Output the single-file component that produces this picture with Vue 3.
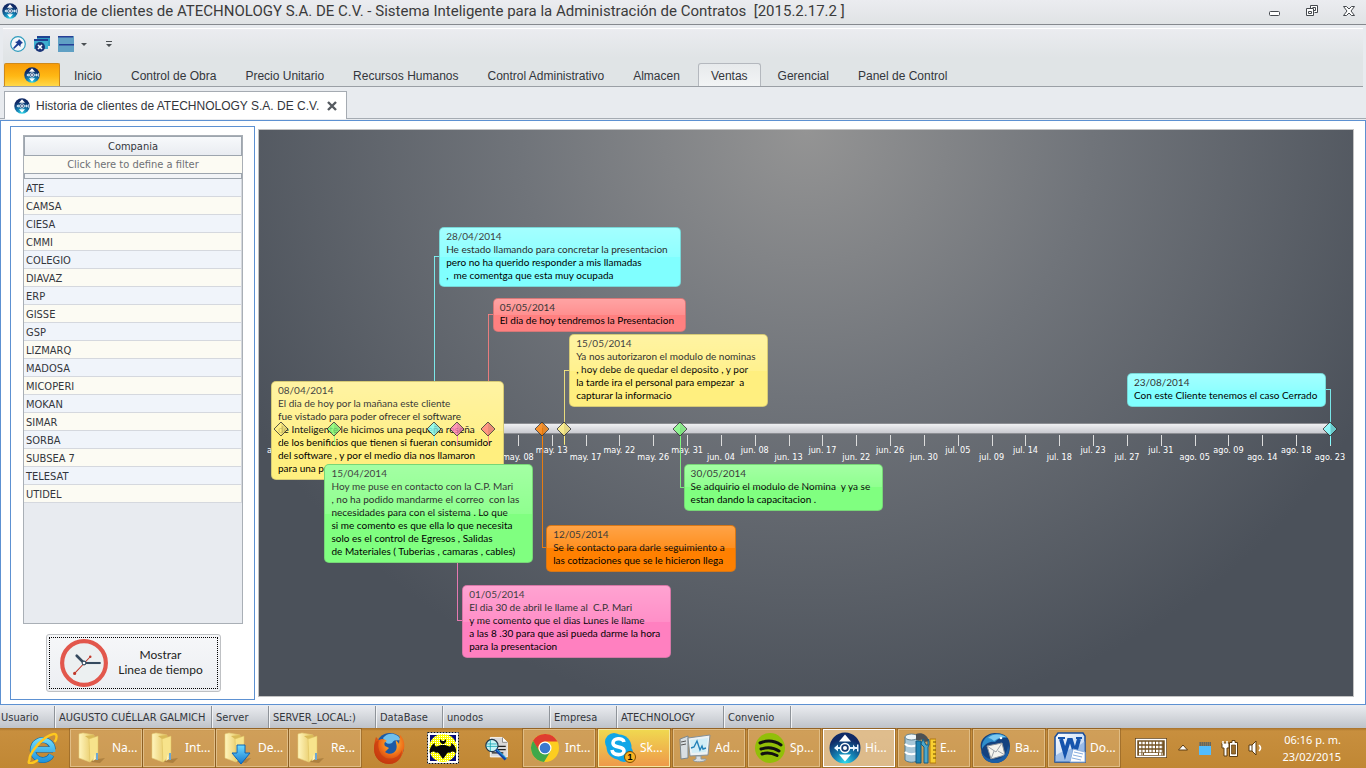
<script setup>
const menu = ['Inicio', 'Control de Obra', 'Precio Unitario', 'Recursos Humanos', 'Control Administrativo', 'Almacen', 'Ventas', 'Gerencial', 'Panel de Control']

const companies = ['ATE', 'CAMSA', 'CIESA', 'CMMI', 'COLEGIO', 'DIAVAZ', 'ERP', 'GISSE', 'GSP', 'LIZMARQ', 'MADOSA', 'MICOPERI', 'MOKAN', 'SIMAR', 'SORBA', 'SUBSEA 7', 'TELESAT', 'UTIDEL']

const tickLabels = [
  'abr. 08', 'abr. 12', 'abr. 17', 'abr. 21', 'abr. 25', 'abr. 30', 'may. 04', 'may. 08',
  'may. 13', 'may. 17', 'may. 22', 'may. 26', 'may. 31', 'jun. 04', 'jun. 08', 'jun. 13',
  'jun. 17', 'jun. 22', 'jun. 26', 'jun. 30', 'jul. 05', 'jul. 09', 'jul. 14', 'jul. 18',
  'jul. 23', 'jul. 27', 'jul. 31', 'ago. 05', 'ago. 09', 'ago. 14', 'ago. 18', 'ago. 23',
]
const lastTick = tickLabels.length - 1

/* at: place on the axis in tenths of a percent; y: card offset from the axis; elbow: connector offset from the axis */
const events = [
  { date: '08/04/2014', at: 0, x: -10, y: -47, w: 233, elbow: 0, color: '#ffef7f', lines: ['El dia de hoy por la mañana este cliente', 'fue vistado para poder ofrecer el software', 'de Inteligente le hicimos una pequeña reseña', 'de los benificios que tienen si fueran consumidor', 'del software , y por el medio dia nos llamaron', 'para una presentacion'] },
  { date: '15/04/2014', at: 51, x: -10, y: 36, w: 209, elbow: 0, color: '#80ff80', lines: ['Hoy me puse en contacto con la C.P. Mari', ', no ha podido mandarme el correo  con las', 'necesidades para con el sistema . Lo que', 'si me comento es que ella lo que necesita', 'solo es el control de Egresos , Salidas', 'de Materiales ( Tuberias , camaras , cables)'] },
  { date: '28/04/2014', at: 146, x: 5, y: -201, w: 242, elbow: -172, color: '#80ffff', lines: ['He estado llamando para concretar la presentacion', 'pero no ha querido responder a mis llamadas', ',  me comentga que esta muy ocupada'] },
  { date: '01/05/2014', at: 168, x: 5, y: 157, w: 209, elbow: 192, color: '#ff80c0', lines: ['El dia 30 de abril le llame al  C.P. Mari', 'y me comento que el dias Lunes le llame', 'a las 8 .30 para que asi pueda darme la hora', 'para la presentacion'] },
  { date: '05/05/2014', at: 197, x: 5, y: -130, w: 193, elbow: -114, color: '#ff8080', lines: ['El dia de hoy tendremos la Presentacion'] },
  { date: '12/05/2014', at: 249, x: 4, y: 97, w: 190, elbow: 119, color: '#ff8000', lines: ['Se le contacto para darle seguimiento a', 'las cotizaciones que se le hicieron llega'] },
  { date: '15/05/2014', at: 270, x: 5, y: -94, w: 199, elbow: -58, color: '#ffef7f', lines: ['Ya nos autorizaron el modulo de nominas', ', hoy debe de quedar el deposito , y por', 'la tarde ira el personal para empezar  a', 'capturar la informacio'] },
  { date: '30/05/2014', at: 380, x: 4, y: 36, w: 199, elbow: 59, color: '#80ff80', lines: ['Se adquirio el modulo de Nomina  y ya se', 'estan dando la capacitacion .'] },
  { date: '23/08/2014', at: 1000, x: -203, y: -55, w: 199, elbow: -39, left: true, color: '#80ffff', lines: ['Con este Cliente tenemos el caso Cerrado'] },
]

const status = [
  ['Usuario', 's55'], ['AUGUSTO CUÉLLAR GALMICH', 's157'], ['Server', 's57'], ['SERVER_LOCAL:)', 's107'],
  ['DataBase', 's67'], ['unodos', 's107'], ['Empresa', 's67'], ['ATECHNOLOGY', 's107'], ['Convenio', 's67'],
]

const folders = [['i-folder', 'Na...'], ['i-folder', 'Int...'], ['i-download', 'De...'], ['i-folder', 'Re...']]
const apps = [
  ['i-chrome', 'Int...', ''], ['i-skype', 'Sk...', 'alert', '1'], ['i-monitor', 'Ad...', ''], ['i-spotify', 'Sp...', ''],
  ['i-logo', 'Hi...', 'current'], ['i-tools', 'E...', ''], ['i-bird', 'Ba...', ''], ['i-word', 'Do...', ''],
]

function stem(e) {
  const top = Math.min(e.elbow, 0)
  const bottom = Math.max(e.elbow, 16)
  return { left: e.at / 10 + '%', top: top + 'px', height: bottom - top + 'px', background: e.color }
}
function elbow(e) {
  return { left: `calc(${e.at / 10}% - ${e.left ? 5 : 0}px)`, top: e.elbow + 'px', background: e.color }
}
function card(e) {
  return { left: `calc(${e.at / 10}% + ${e.x}px)`, top: e.y + 'px', width: e.w + 'px', backgroundColor: e.color }
}
</script>

<template>
  <svg class="defs" aria-hidden="true">
    <defs>
      <radialGradient id="g-logo" cx=".5" cy="1" r=".8">
        <stop offset="0" stop-color="#2fe0f0" /><stop offset=".45" stop-color="#1583b4" /><stop offset="1" stop-color="#102a66" />
      </radialGradient>
      <linearGradient id="g-folder" x1="0" x2="1"><stop offset="0" stop-color="#fff5bd" /><stop offset="1" stop-color="#e5c55c" /></linearGradient>
      <linearGradient id="g-blue" x1="0" y1="0" x2="0" y2="1"><stop offset="0" stop-color="#6fdcff" /><stop offset="1" stop-color="#1577cf" /></linearGradient>
      <linearGradient id="g-ie" gradientUnits="userSpaceOnUse" x1="0" y1="4" x2="0" y2="30"><stop offset="0" stop-color="#7be4ff" /><stop offset="1" stop-color="#1f93dc" /></linearGradient>
      <radialGradient id="g-fox" cx=".6" cy=".3" r=".8"><stop offset="0" stop-color="#ffc53a" /><stop offset=".5" stop-color="#ee6a17" /><stop offset="1" stop-color="#b02a0c" /></radialGradient>
      <linearGradient id="g-word" x1="0" y1="0" x2="1" y2="1"><stop offset="0" stop-color="#fff" /><stop offset="1" stop-color="#a9c8ef" /></linearGradient>
      <pattern id="p-dots" width="2" height="2" patternUnits="userSpaceOnUse"><rect width="2" height="2" fill="#ff0" /><path d="M0 0h1v1H0z" fill="#fff" /></pattern>
    </defs>
    <symbol id="i-logo" viewBox="0 0 32 32">
      <circle cx="16" cy="16" r="15.500" fill="url(#g-logo)" />
      <path d="M16 2.500l6 7H10zM16 29.500l6-7H10z" fill="#fff" />
      <path d="M5 16l4-3.500v2.500h3v2H9v2.500zM20 15h4v-2.500l2 2.500h2v-2.500h1.500v7H28V17h-2l-2 2.500V17h-4z" fill="#eaf6ff" />
      <circle cx="16" cy="16" r="4.500" fill="#173b73" stroke="#fff" stroke-width="1.500" /><circle cx="16" cy="16" r="2" fill="#fff" />
    </symbol>
    <symbol id="i-folder" viewBox="0 0 32 32">
      <path d="M15 28l14-2-5 5-9-1z" fill="#8a6228" opacity=".45" />
      <path d="M3 2l4-1 11 2v24l-4 3L3 26z" fill="url(#g-folder)" stroke="#e8d078" stroke-width=".6" />
      <path d="M9 4l9-1v24l-4 3-1-23z" fill="#d9ba58" /><path d="M13 7l9-3v19l-8 7z" fill="#f7e38b" stroke="#dcc160" stroke-width=".5" />
      <path d="M20 21h2v7h-2z" fill="#6ca8d4" /><path d="M17 29l2-7 1 5z" fill="#fff4bd" />
    </symbol>
    <symbol id="i-download" viewBox="0 0 32 32">
      <use href="#i-folder" width="32" height="32" />
      <path d="M15 13h8v8h5l-9 11-9-11h5z" fill="url(#g-blue)" stroke="#0d63b4" />
    </symbol>
    <symbol id="i-ie" viewBox="0 0 32 32">
      <path d="M8 17.500h19M26.800 17.500A10 10 0 1 0 25.500 23" fill="none" stroke="#0b66a8" stroke-width="6" />
      <path d="M8 17.500h18.800A10 10 0 1 0 25.500 23" fill="none" stroke="url(#g-ie)" stroke-width="4.800" />
      <path d="M4 27C0 33 6 32 12 28M3.500 28C3 23 10 13 19 6 25 2 31 0 30.500 5c0 2-1 4-2 5" fill="none" stroke="#ffc81e" stroke-width="2.400" />
    </symbol>
    <symbol id="i-firefox" viewBox="0 0 32 32">
      <circle cx="17" cy="15" r="14" fill="#1c5aa6" /><path d="M10 6c5-7 15-5 18 2-4 1-7-1-9 3-4 2-7 0-9-5z" fill="#6fc0ed" />
      <path d="M3 5l3 3c3-2 6-1 8 1-3 1-3 3-2 5l4 2-4 4c4 3 9 2 11-2 2-5-1-7 0-10 1 2 2 2 3 4l1-9c4 4 5 9 4 14C29 27 23 32 16 32 8 32 1 26 1 17 1 12 2 8 3 5z" fill="url(#g-fox)" />
      <path d="M1 17C1 11 3 9 6 8c-2 6 0 15 7 18 7 2 13-1 16-8 0 9-6 14-13 14S1 26 1 17z" fill="#c93a10" opacity=".7" />
    </symbol>
    <symbol id="i-bat" viewBox="0 0 32 32">
      <rect x="1" y="1" width="30" height="30" fill="#fff" stroke="#fff" stroke-width="2" /><rect x=".5" y=".5" width="31" height="31" fill="none" stroke="#111" stroke-dasharray="2 1" />
      <path d="M3 3h26v26H3z" fill="#060b78" /><circle cx="16" cy="16" r="14" fill="url(#p-dots)" />
      <path d="M13 7l2 2h2l2-2v3l-2 2h-2l-2-2zM8 11c-1 3 1 4 3 3l3-1h4l3 1c2 1 4 0 3-3 4 2 6 6 5 11-2-3-4-3-6-1-2-1-3 0-4 2l-3 4-3-4c-1-2-2-3-4-2-2-2-4-2-6 1-1-5 1-9 5-11z" fill="#080808" />
    </symbol>
    <symbol id="i-search" viewBox="0 0 32 32">
      <path d="M9 3h15l6 6v18H9z" fill="#d9d9d9" stroke="#fff" /><path d="M24 3v6h6" fill="#fff" stroke="#777" /><path d="M11 14h17M11 18h17M11 22h14" stroke="#222" stroke-width="1.500" />
      <circle cx="11" cy="13" r="7.500" fill="#c9f5f7" stroke="#25384a" stroke-width="1.500" /><path d="M5 11h12M4 14h14M9 6v14" stroke="#16a4b2" /><path d="M16 18l12 12" stroke="#1243a8" stroke-width="4" /><path d="M17 18l12 11" stroke="#27d9ed" />
    </symbol>
    <symbol id="i-chrome" viewBox="0 0 32 32">
      <circle cx="16" cy="16" r="14" fill="#fccd20" /><path d="M4 8.800A14 14 0 0 1 28.500 9.500H16a7 7 0 0 0-6.600 9z" fill="#df3d30" /><path d="M4 8.800A14 14 0 0 0 15 30l7-11.500a7 7 0 0 1-12.600-1z" fill="#3fa84a" />
      <circle cx="16" cy="16" r="6.500" fill="#fff" /><circle cx="16" cy="16" r="5.300" fill="#3979cf" />
    </symbol>
    <symbol id="i-skype" viewBox="0 0 32 32">
      <circle cx="10" cy="10" r="9" fill="#10a6e7" /><circle cx="20" cy="21" r="9" fill="#10a6e7" /><circle cx="15" cy="15" r="12.500" fill="#10a6e7" />
      <path d="M20 10c-1-5-11-4-11 1 0 6 11 2 11 8 0 5-11 5-12-1" fill="none" stroke="#fff" stroke-width="3.600" />
    </symbol>
    <symbol id="i-monitor" viewBox="0 0 32 32">
      <path d="M1 7l8-3v22l-7 1z" fill="#d8dee2" stroke="#7a868d" /><path d="M2 10l5-1M2 13l5-1" stroke="#555" /><path d="M9 6l22-3-2 20-18 1z" fill="#eef2f3" stroke="#849098" /><path d="M11 8l18-2-2 14-14 1z" fill="#d2edf6" /><path d="M12 16l3-1 3-6 3 9 2-4 1 3 3-1" fill="none" stroke="#2381b8" stroke-width="1.400" /><path d="M17 24h5v3h5c1 3-12 4-13 1l3-1z" fill="#d9dee1" stroke="#8f989d" />
    </symbol>
    <symbol id="i-spotify" viewBox="0 0 32 32">
      <circle cx="16" cy="16" r="15" fill="#92bf08" /><path d="M6 11c7-3 15-2 21 2M7 17c6-2 12-2 18 2M8 22c5-2 10-1 15 1.500" fill="none" stroke="#111" stroke-width="3" stroke-linecap="round" />
    </symbol>
    <symbol id="i-tools" viewBox="0 0 32 32">
      <path d="M1 5v23c3 3 10 3 13 0V5z" fill="#a9c8d9" stroke="#577b8b" /><ellipse cx="7.500" cy="5" rx="6.500" ry="3" fill="#edf6fa" stroke="#668797" /><path d="M1 12c3 3 10 3 13 0M1 20c3 3 10 3 13 0" fill="none" stroke="#fff" stroke-width="2" />
      <path d="M12 2c5-2 11 0 13 7l-4 1c-1-3-3-3-5-2h-4z" fill="#4c5155" /><path d="M12 9h5v22h-5z" fill="#1d83b4" stroke="#0f587e" /><path d="M19 7l-2 5 3 3v16h4V15l2-4-2-4v6h-2z" fill="#4ca7cd" stroke="#145d83" />
      <path d="M26 7h6v24h-6z" fill="#f8cf31" stroke="#b47a0e" /><path d="M29 10h3M29 14h3M29 18h3M29 22h3M29 26h3" stroke="#714b00" />
    </symbol>
    <symbol id="i-bird" viewBox="0 0 32 32">
      <path d="M2 17C0 7 8 1 17 1c9 0 14 5 14 13 0 10-6 17-15 17C8 31 3 26 2 17z" fill="#14427f" /><path d="M3 17C2 9 8 2 16 2c5-1 10 1 12 4-5-1-9 0-12 4C12 9 6 11 3 17z" fill="#2f8ecb" />
      <path d="M9 6c5-5 13-4 18-1-6 0-9 2-12 4-2-2-4-3-6-3z" fill="#7cc8ee" />
      <path d="M8 14l15-3 3 12-14 4z" fill="#f5f4ee" stroke="#8c9299" /><path d="M8 14l9 6 6-9M12 27l3-8M26 23l-7-4" fill="none" stroke="#9ea3a8" /><circle cx="22" cy="6" r="1.300" fill="#fff" />
      <path d="M2 19c3 7 11 11 20 7 4-3 7-8 7-13 3 8-2 18-13 18C8 31 3 26 2 19z" fill="#1b5ea6" />
    </symbol>
    <symbol id="i-word" viewBox="0 0 32 32">
      <path d="M4 1h25l2 3v26H1V5z" fill="url(#g-word)" stroke="#174c9b" stroke-width="1.500" /><path d="M1 24c10-8 19-5 30-15v21H1z" fill="#7da7dd" opacity=".6" />
      <path d="M7 7l4 14 4-13h2l4 13 4-14" fill="none" stroke="#1554ad" stroke-width="4" /><path d="M4 6h7M22 6h6" stroke="#1554ad" stroke-width="2" /><path d="M19 17l12 3v10H16z" fill="#fff" stroke="#8db0df" /><path d="M20 20l9 2M19 23l9 2M18 26l9 2" stroke="#89aede" />
    </symbol>
  </svg>

  <div class="desktop">
    <header class="titlebar">
      <svg class="ico16"><use href="#i-logo" /></svg>
      <h1>Historia de clientes de ATECHNOLOGY S.A. DE C.V. - Sistema Inteligente para la Administración de Contratos&nbsp; [2015.2.17.2 ]</h1>
      <button class="win" aria-label="Minimizar"><svg viewBox="0 0 12 12"><rect x=".5" y="6.500" width="10" height="4" rx="1" /></svg></button>
      <button class="win" aria-label="Restaurar"><svg viewBox="0 0 12 12"><path d="M4.500 3.500v-3h7v7h-3M.5 3.500h7v7h-7zM2.500 6.500h3v2h-3zM6.500 2.500h3v3h-2" /></svg></button>
      <button class="win" aria-label="Cerrar"><svg viewBox="0 0 12 12"><path d="M.5 1.500h3L6 4l2.500-2.500h3L8 6l3.500 4.500h-3L6 8l-2.500 2.500h-3L4 6z" /></svg></button>
    </header>

    <section class="ribbon">
      <div class="quick">
        <button aria-label="Fijar"><svg viewBox="0 0 16 16"><circle cx="8" cy="8" r="7.300" fill="#f4f8fa" stroke="#2e9bbd" stroke-width="1.200" /><path d="M9 3l4 4-1.500.5-1 1.500v2l-2-2L4 13l-1-1 4-4.500-2-1.500 2-.5L8.500 4z" fill="#1d3f94" /></svg></button>
        <button aria-label="Cerrar ventanas"><svg viewBox="0 0 16 16"><path d="M3 0h13v10H3z" fill="#2e9cc5" /><path d="M3 0h13v2H3z" fill="#1f4292" /><path d="M0 3h14v10H0z" fill="#3eaed0" /><path d="M0 3h14v2H0z" fill="#1f4292" /><circle cx="6" cy="11" r="5" fill="#1b3678" /><path d="M4 9l4 4M8 9l-4 4" stroke="#fff" stroke-width="1.600" /></svg></button>
        <button aria-label="Ventanas"><svg viewBox="0 0 16 16"><path d="M0 0h16v16H0z" fill="#60a0c4" /><path d="M0 0h15v1.500H0zM1 8h15v1.500H1z" fill="#263f96" /></svg></button>
        <button class="drop" aria-label="Opciones de ventanas"><svg viewBox="0 0 8 8"><path d="M1 3h6L4 6z" fill="#4b5054" /></svg></button>
        <button class="drop last" aria-label="Personalizar"><svg viewBox="0 0 8 8"><path d="M1 1h6v1H1zM1 4h6L4 7z" fill="#4b5054" /></svg></button>
      </div>
      <nav class="menu">
        <button class="appbtn" aria-label="Menú principal"><svg class="ico16"><use href="#i-logo" /></svg></button>
        <button v-for="m in menu" :key="m" class="menuitem" :class="{ active: m === 'Ventas' }">{{ m }}</button>
      </nav>
    </section>

    <div class="doctabs">
      <div class="doctab">
        <svg class="ico16"><use href="#i-logo" /></svg>
        <span>Historia de clientes de ATECHNOLOGY S.A. DE C.V.</span>
        <button aria-label="Cerrar pestaña"><svg viewBox="0 0 10 10"><path d="M1 1l8 8M9 1L1 9" stroke="#555a60" stroke-width="2.400" /></svg></button>
      </div>
    </div>

    <main class="work">
      <aside class="side">
        <div class="grid">
          <table>
            <thead>
              <tr><th scope="col">Compania</th></tr>
              <tr class="filter"><td>Click here to define a filter</td></tr>
              <tr class="split"><td></td></tr>
            </thead>
            <tbody>
              <tr v-for="c in companies" :key="c"><td>{{ c }}</td></tr>
            </tbody>
          </table>
        </div>
        <button class="show">
          <svg viewBox="0 0 48 48">
            <circle cx="24" cy="24" r="21" fill="#ecf0f1" stroke="#e2574c" stroke-width="4" />
            <path d="M15 34L30 18" stroke="#c0392b" stroke-width="1" /><circle cx="15" cy="34" r="1.500" fill="#c0392b" /><circle cx="30" cy="18" r="1.200" fill="#c0392b" />
            <path d="M24 24h16" stroke="#34495e" stroke-width="2" /><path d="M24 24l-7-7" stroke="#34495e" stroke-width="2.500" stroke-linecap="round" />
            <circle cx="24" cy="24" r="1.800" fill="#fff" stroke="#34495e" />
          </svg>
          <span>Mostrar<br>Linea de tiempo</span>
        </button>
      </aside>

      <section class="stage" aria-label="Linea de tiempo">
        <div class="axis">
          <div class="bar"></div>
          <template v-for="(t, i) in tickLabels" :key="t">
            <i class="tick" :style="{ left: (i * 100) / lastTick + '%' }"></i>
            <span class="tlabel" :class="{ low: i % 2 }" :style="{ left: (i * 100) / lastTick + '%' }">{{ t }}</span>
          </template>
          <template v-for="e in events" :key="e.date">
            <template v-if="e.elbow">
              <i class="stem" :style="stem(e)"></i>
              <i class="elbow" :style="elbow(e)"></i>
            </template>
          </template>
          <article v-for="e in events" :key="e.date" class="card" :style="card(e)">
            <time>{{ e.date }}</time>
            <p v-for="l in e.lines" :key="l">{{ l }}</p>
          </article>
          <i v-for="e in events" :key="e.date" class="tail" :style="{ left: e.at / 10 + '%', background: e.color }"></i>
          <svg v-for="e in events" :key="e.date" class="gem" viewBox="0 0 16 16" :style="{ left: e.at / 10 + '%' }">
            <path d="M8 1l7 7-7 7-7-7z" :fill="e.color" /><path d="M8 1l7 7-7 7z" fill="#000" opacity=".1" /><path d="M8 1l7 7-7 7-7-7z" fill="none" stroke="#333" />
          </svg>
        </div>
      </section>
    </main>

    <footer class="status">
      <span v-for="s in status" :key="s[0]" :class="s[1]">{{ s[0] }}</span>
    </footer>

    <nav class="taskbar">
      <button class="pin ie" aria-label="Internet Explorer"><svg><use href="#i-ie" /></svg></button>
      <div class="tasks tight">
        <button v-for="(f, i) in folders" :key="i" class="task"><svg><use :href="'#' + f[0]" /></svg>{{ f[1] }}</button>
      </div>
      <div class="pins">
        <button class="pin" aria-label="Firefox"><svg><use href="#i-firefox" /></svg></button>
        <button class="pin" aria-label="The Bat"><svg><use href="#i-bat" /></svg></button>
        <button class="pin small" aria-label="Buscar"><svg><use href="#i-search" /></svg></button>
      </div>
      <div class="tasks">
        <button v-for="a in apps" :key="a[0]" class="task" :class="a[2]"><svg><use :href="'#' + a[0]" /></svg>{{ a[1] }}<b v-if="a[3]" class="badge">{{ a[3] }}</b></button>
      </div>
      <div class="tray">
        <button aria-label="Teclado"><svg width="32" height="20" viewBox="0 0 32 20"><rect x="1.500" y="1.500" width="29" height="17" fill="none" stroke="#5d3d11" stroke-width="3" /><rect x="1.500" y="1.500" width="29" height="17" fill="#735222" stroke="#fff" stroke-width="1.500" /><path d="M4 5h24M4 9h24M4 13h24M4 16h4M24 16h4" stroke="#fff" stroke-width="2.400" stroke-dasharray="2.400 1" /><path d="M9 16h14" stroke="#fff" stroke-width="2" /></svg></button>
        <button aria-label="Iconos ocultos"><svg width="12" height="8" viewBox="0 0 12 8"><path d="M6 1l4.500 5h-9z" fill="#fff" stroke="#5d3d11" /></svg></button>
        <button aria-label="Calendario"><svg width="12" height="13" viewBox="0 0 12 13"><path d="M0 0h12v13H0z" fill="#52bdff" /><path d="M0 0h12v4H0z" fill="#66665f" /><path d="M0 1h12M0 3h12" stroke="#a88a57" stroke-dasharray="1 1" /></svg></button>
        <button aria-label="Batería"><svg width="17" height="17" viewBox="0 0 17 17"><path d="M1 3h7v5H6v8H3V8H1z" fill="#fff" stroke="#5d3d11" /><path d="M2 1v3M6 1v3" stroke="#fff" stroke-width="1.500" /><path d="M8.500 2.500H11v-2h3v2h2.500v14h-8z" fill="#fff" stroke="#5d3d11" /><path d="M10.500 5h4v9h-4z" fill="#9a6c2c" stroke="#5d3d11" stroke-width=".7" /></svg></button>
        <button aria-label="Volumen"><svg width="15" height="16" viewBox="0 0 15 16"><path d="M1 5h3l4-4v14l-4-4H1z" fill="#fff" stroke="#5d3d11" /><path d="M4 5v6" stroke="#5d3d11" /><path d="M11 5c2 2 2 4 0 6" fill="none" stroke="#fff" stroke-width="1.600" /></svg></button>
        <time class="clock">06:16 p. m.<br>23/02/2015</time>
      </div>
    </nav>
  </div>
</template>

<style>
html, body { margin: 0; background: #e8ebef; }
</style>

<style scoped>
.defs { position: absolute; width: 0; height: 0; }
button { font: inherit; color: inherit; border: 0; padding: 0; margin: 0; background: none; display: flex; align-items: center; }
.ico16 { width: 16px; height: 16px; flex: none; }
.desktop { display: flex; flex-direction: column; min-height: 100vh; overflow: hidden; font-family: "DejaVu Sans Condensed", "Noto Sans", sans-serif; font-size: 11px; color: #33363c; }

.titlebar { height: 25px; display: flex; align-items: center; padding: 0 11px 2px 2px; box-sizing: border-box; border-bottom: 1px solid #85898e; background: linear-gradient(#ebecf0, #e0e3e5); }
h1 { flex: 1; margin: 0 0 0 7px; font: 400 15px/20px Roboto, "Noto Sans", sans-serif; color: #3b3b3b; white-space: nowrap; }
.win { width: 12px; height: 12px; margin-left: 25px; }
.win svg { width: 12px; height: 12px; fill: #fff; stroke: #45494e; }

.ribbon { margin: 3px 3px 0; border-top: 1px solid #fff; border-bottom: 1px solid #9a9fa5; background: linear-gradient(#ebecf0, #e0e4e6 50%); height: 57px; display: flex; flex-direction: column; justify-content: space-between; }
.quick { display: flex; align-items: center; gap: 8px; padding: 7px 0 0 7px; }
.quick svg { width: 16px; height: 16px; }
.quick .drop svg { width: 8px; height: 8px; }
.quick .drop { margin-left: -2px; }
.quick .last { margin-left: 9px; }
.menu { display: flex; gap: 3px; font: 12px/14px "Liberation Sans", Arial, sans-serif; }
.appbtn { width: 56px; height: 23px; margin: 0 -2px 0 1px; justify-content: center; border: 1px solid #cf8a1b; border-bottom: 0; border-radius: 2px 2px 0 0; background: linear-gradient(#f79c08, #ffb814 55%, #ffd84a); }
.menuitem { padding: 1px 12px 0; height: 23px; border: 1px solid transparent; border-bottom: 0; }
.menuitem.active { padding: 1px 12px 0; margin: 0 1px 0 2px; border-color: #b4b8be; border-radius: 3px 3px 0 0; background: linear-gradient(#e7eaec, #f2f4f5); }

.doctabs { height: 31px; display: flex; align-items: flex-end; border-bottom: 1px solid #a5abb2; padding-left: 4px; background: #e8ebef; }
.doctab { height: 27px; display: flex; align-items: center; padding: 0 9px; border: 1px solid #a5abb2; border-bottom: 0; background: #fff; margin-bottom: -1px; font: 12px/14px "Liberation Sans", Arial, sans-serif; }
.doctab span { margin: 0 8px 0 6px; }
.doctab button svg { width: 10px; height: 10px; }

.work { flex: 1; display: flex; gap: 3px; margin-top: 1px; padding: 5px 11px 4px 9px; border: 1px solid #5d91d2; background: #fff; }
.side { flex: none; border: 1px solid #5d91d2; display: flex; flex-direction: column; align-items: center; padding: 8px 11px 7px 12px; box-sizing: border-box; width: 245px; }
.grid { flex: 1; align-self: stretch; border: 1px solid #a9afb6; background: #e8ebf0; margin-bottom: 10px; }
table { width: 100%; border-collapse: separate; border-spacing: 0; line-height: 15px; }
td, th { padding: 2px 2px 0; height: 15px; font-weight: 400; }
th { border: 1px solid #9da5ae; background: linear-gradient(#f7f9fb, #e9ecf1); line-height: 16px; }
tbody td { border-bottom: 1px solid #d5d8de; border-right: 1px solid #d5d8de; }
tbody tr:nth-child(odd) { background: #f0f4fa; }
tbody tr:nth-child(even) { background: #fcfbf3; }
.filter td { height: 16px; padding: 0 2px 1px; text-align: center; color: #6e7075; background: #fcfbf3; }
.split td { height: 4px; padding: 0; border: 1px solid #9da5ae; background: #f2f4f7; }
.show { width: 175px; height: 58px; flex: none; padding: 0 12px; justify-content: space-between; border: 1px solid #bfc1c4; border-radius: 3px; background: linear-gradient(#f6f7f9, #eceef2); outline: 1px dotted #000; outline-offset: -4px; font: 12px/15px Lato, sans-serif; text-align: center; color: #222; }
.show svg { width: 50px; height: 50px; }
.show span { flex: 1; padding: 0 0 2px 5px; }

.stage { flex: 1; margin-top: 3px; margin-bottom: 3px; padding: 298px 23px 0 22px; border: 1px solid #c2c2c2; background: radial-gradient(ellipse 58% 105% at 50% 0, #949494, #70747a 45%, #4b515a); overflow: hidden; }
.axis { position: relative; height: 0; }
.bar { position: absolute; left: 0; right: 0; top: -5px; height: 9px; border: solid #8c8e93; border-width: 1px 0; background: linear-gradient(#eff0f2, #c9cad0); }
.tick { position: absolute; top: 7px; width: 1px; height: 11px; background: #ddd; }
.tlabel { position: absolute; top: 16px; width: 60px; margin-left: -30px; text-align: center; font: 9px/13px "DejaVu Sans Condensed", sans-serif; color: #fff; }
.tlabel.low { top: 23px; }
.stem { position: absolute; width: 1px; opacity: .85; }
.elbow { position: absolute; width: 5px; height: 1px; opacity: .85; }
.tail { position: absolute; top: 6px; width: 1px; height: 11px; opacity: .8; }
.gem { position: absolute; top: -7px; width: 16px; height: 16px; margin-left: -8px; opacity: .8; }
.card { position: absolute; box-sizing: border-box; padding: 2px 0 4px 6px; border: 1px solid rgba(90, 90, 90, .25); border-radius: 5px; font: 10px/13px Lato, sans-serif; color: #000; white-space: pre; }
.card::after { content: ""; position: absolute; inset: 0; border-radius: 4px; background: linear-gradient(rgba(255, 255, 255, .28), rgba(255, 255, 255, .12) 50%, transparent 50%); }
.card time { display: block; }
.card p { margin: 0; }

.status { height: 22px; margin-top: 1px; display: flex; background: linear-gradient(#e9ebef, #bfc3c9); }
.status span { box-sizing: border-box; border-right: 1px solid #8e9399; padding-left: 4px; line-height: 23px; white-space: nowrap; box-shadow: 1px 0 #f2f3f5; }
.status .s55 { width: 55px; padding-left: 1px; }
.status .s157 { width: 157px; }
.status .s57 { width: 57px; }
.status .s107 { width: 107px; }
.status .s67 { width: 67px; }

.taskbar { height: 40px; display: flex; align-items: center; background: linear-gradient(#a8722b, #c88f3e 3px, #c08734); color: #fff; font: 12px/16px "Noto Sans", sans-serif; }
.pin svg { width: 32px; height: 32px; }
.ie { width: 70px; justify-content: center; padding-left: 13px; box-sizing: border-box; }
.pins { display: flex; align-items: center; gap: 22px; padding: 0 14px 0 12px; }
.small svg { width: 26px; height: 26px; }
.pin.small { margin-left: 2px; }
.tasks { display: flex; gap: 3px; height: 38px; }
.tight { gap: 1px; }
.task { position: relative; box-sizing: border-box; width: 72px; padding-left: 5px; gap: 4px; border: 1px solid #e0bd86; background: rgba(224, 190, 140, .35); box-shadow: 0 0 0 1px rgba(100, 64, 20, .35); white-space: nowrap; }
.task svg { width: 32px; height: 32px; flex: none; }
.badge { position: absolute; left: 25px; bottom: 3px; width: 10px; height: 10px; border: 1px solid #7c4a00; border-radius: 50%; background: #f9b322; color: #000; font: 700 9px/10px "Liberation Sans", sans-serif; text-align: center; }
.alert { background: linear-gradient(#f0d850, #ee9a4a); border-color: #f5e6a0; }
.current { background: rgba(238, 220, 195, .6); border-color: #fff; }
.tray { flex: 1; display: flex; align-items: center; padding: 0 25px 0 15px; justify-content: space-between; }
.clock { margin-left: 10px; text-align: right; font-size: 11px; line-height: 17px; white-space: nowrap; }
</style>
